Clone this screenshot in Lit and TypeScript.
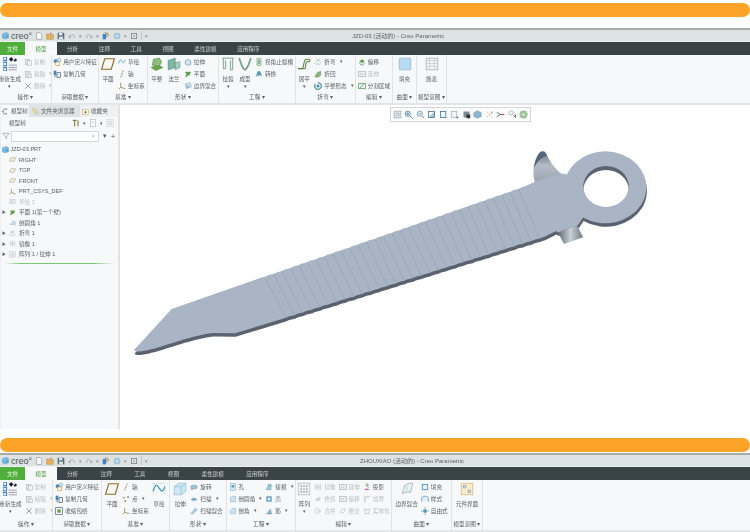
import { LitElement, html, css, svg, nothing } from 'lit';
import { customElement, property } from 'lit/decorators.js';

// icon shapes, all on a 12x12 box
const B = '#3f86c6';
const G = '#5fa24a';
const Y = '#d9a441';
const K = '#555c62';

const icons: Record<string, unknown> = {
  regen: svg`<rect x="0" y="0" width="3" height="3" fill="none" stroke="${B}"/><rect x="0" y="4.5" width="3" height="3" fill="none" stroke="${B}"/><rect x="0" y="9" width="3" height="3" fill="none" stroke="${B}"/><path d="M5 2l2-2 2 2-2 2zM9 3l2-2 1 2-2 1z" fill="#223"/><path d="M5 7h7M5 9h7M5 11h7" stroke="#99a" stroke-width=".8"/>`,
  copy: svg`<rect x="2" y="2" width="6" height="8" fill="#dfe4e8" stroke="#b4bcc2"/><rect x="5" y="4" width="6" height="7" fill="#eef1f3" stroke="#b4bcc2"/>`,
  paste: svg`<rect x="2" y="2" width="7" height="9" fill="#dfe4e8" stroke="#b4bcc2"/><rect x="6" y="6" width="5" height="5" fill="#eef1f3" stroke="#b4bcc2"/>`,
  del: svg`<path d="M2 2l8 8M10 2l-8 8" stroke="#8b9196" stroke-width="1.3"/>`,
  udf: svg`<circle cx="4" cy="5" r="3" fill="${B}"/><rect x="4" y="6" width="6" height="5" fill="#f1f3f5" stroke="${Y}"/><rect x="7" y="1" width="4" height="4" fill="#dfe8ee" stroke="#8aa"/>`,
  copygeom: svg`<rect x="1" y="1" width="4" height="7" fill="${B}"/><rect x="6" y="4" width="5" height="7" fill="#eef1f3" stroke="#456"/><path d="M2 10h3" stroke="${K}"/>`,
  shrink: svg`<rect x="1" y="1" width="10" height="10" fill="#fff" stroke="#456"/><rect x="3.5" y="3.5" width="5" height="5" fill="${G}"/>`,
  plane: svg`<path d="M3.2 1.5h8.3l-2.7 9H.5z" fill="#fbfaf5" stroke="#8a6b2e"/>`,
  sketch: svg`<path d="M1 8c2-7 3-6 5-3s3 3 5-2" fill="none" stroke="#2f8fb8" stroke-width="1.1"/>`,
  sketchBig: svg`<path d="M1 1h10M1 1v10M11 1v10" stroke="#9ab" stroke-width=".5" stroke-dasharray="1 1" fill="none"/><path d="M1 8c2-7 3-6 5-3s3 5 5-1" fill="none" stroke="#2f8fb8" stroke-width="1"/>`,
  axis: svg`<path d="M4 11L8 1" stroke="#6b5a2c" stroke-dasharray="3 1" stroke-width="1"/>`,
  point: svg`<path d="M2 3h2v2H2zM8 2h2v2H8zM4 8h2v2H4z" fill="#6b5a2c"/>`,
  csys: svg`<path d="M4 1v7l7 2M4 8l-3 3" fill="none" stroke="#8a6b2e" stroke-width="1"/>`,
  flat: svg`<path d="M1 9l6-2 4 2-6 2.5z" fill="#6aa84f" stroke="#4c7a3b" stroke-width=".5"/><path d="M2 7l1-5 5-1 2 3-2 4z" fill="#8ec07c" stroke="#4c7a3b" stroke-width=".5"/>`,
  flange: svg`<path d="M1 3l6-2v8l-6 2z" fill="#7fb8a4" stroke="#4a8270" stroke-width=".5"/><path d="M7 5l4-1v5l-4 2z" fill="#a9cfc0" stroke="#4a8270" stroke-width=".5"/>`,
  pull: svg`<path d="M2 4l5-2 3 2v6l-5 1-3-2z" fill="#d4e6f1" stroke="#4f87aa" stroke-width=".8"/>`,
  face: svg`<path d="M2 3h8L8 8H5l-1 2H2l2-4z" fill="${G}" stroke="#47803a" stroke-width=".5"/>`,
  blend: svg`<path d="M2 3l7-2 2 6-7 3z" fill="#cfe3ef" stroke="#6b9ab5" stroke-width=".8"/><circle cx="5" cy="7" r="2" fill="#8fb7cd"/>`,
  rip: svg`<path d="M1 1h10M2 1v9h2V3M8 3v8h2V1" fill="#e8f1ec" stroke="#78a08c" stroke-width=".8"/>`,
  form: svg`<path d="M1 1c2 5 2 8 5 10 3-2 3-5 5-10" fill="none" stroke="#78a08c" stroke-width="1.5"/>`,
  relief: svg`<path d="M3 1h6v10H3z" fill="#e3efe6" stroke="${G}"/><path d="M6 3v6" stroke="#23688f" stroke-width="1.5"/>`,
  convert: svg`<path d="M1 10l3-8h4l3 8-3-2H5z" fill="#5aa0cf"/><path d="M6 2v8" stroke="${G}"/>`,
  unbend: svg`<path d="M1 10h4l1-5 1-3h4v2H8l-1 6H1z" fill="#f1f2ec" stroke="#4c7a3b" stroke-width=".8"/>`,
  bend: svg`<path d="M1 9c3-7 7-7 10 0" fill="none" stroke="#87a88f" stroke-width="1.2" stroke-dasharray="1.5 1"/><path d="M3 1l3 3 3-3M3 11l3-3 3 3" fill="none" stroke="#87a88f"/>`,
  bendback: svg`<path d="M1 10l4-6 5-2v6l-4 3z" fill="#8bb47f" stroke="#4c7a3b" stroke-width=".6"/>`,
  flatstate: svg`<path d="M6 1a5 5 0 1 1-4 2" fill="none" stroke="#5aa07e" stroke-width="2"/><path d="M4 4h4v4H4z" fill="#3f86c6"/>`,
  offset: svg`<path d="M2 5l4-3 4 3-4 3z" fill="${G}"/><path d="M2 8l4 3 4-3" fill="none" stroke="#456"/>`,
  extend: svg`<rect x="1" y="2" width="10" height="8" fill="#edf0f1" stroke="#a8b0b5"/><path d="M3 6h5" stroke="#a8b0b5"/>`,
  split: svg`<rect x="1" y="2" width="10" height="8" fill="#e8f4e8" stroke="#5c8f55"/><path d="M3 9l6-6" stroke="#3f86c6"/>`,
  fillBig: svg`<rect x="1" y="1" width="10" height="10" rx=".8" fill="#b9dcf3" stroke="#7ea9c4" stroke-width=".5"/>`,
  family: svg`<rect x="1" y="1" width="10" height="10" fill="#f6f7f7" stroke="#8e9396" stroke-width=".5"/><path d="M1 3h10M1 5.5h10M1 8h10M4 1v10M8 1v10" stroke="#a9aeb1" stroke-width=".4"/>`,
  extrudeBig: svg`<path d="M1 4l4-3h6v7l-4 3H1z" fill="#cde6f4" stroke="#7fb2cf" stroke-width=".5"/><path d="M1 4h6v7M7 4l4-3" fill="none" stroke="#7fb2cf" stroke-width=".5"/>`,
  revolve: svg`<ellipse cx="6" cy="6" rx="5" ry="3" fill="#9fc3d9" stroke="#5b8aa6" stroke-width=".6"/><path d="M1 9l3 1" stroke="#b55"/>`,
  sweep: svg`<path d="M1 7c3-4 7-4 10 0-3 2-7 2-10 0z" fill="#6fa9cf"/>`,
  sweepblend: svg`<path d="M1 10l7-8 3 2-7 7z" fill="#a9cae0" stroke="#6b9ab5" stroke-width=".5"/>`,
  hole: svg`<rect x="2" y="1" width="8" height="10" fill="#d5e7f3" stroke="#7aa6c2" stroke-width=".7"/><circle cx="6" cy="5" r="2" fill="#5a9ac4"/>`,
  round: svg`<path d="M2 10V5c0-2 2-3 4-3h4v8z" fill="#cfe3ef" stroke="#7aa6c2" stroke-width=".7"/>`,
  chamfer: svg`<path d="M2 10V5l3-3h5v8z" fill="#cfe3ef" stroke="#7aa6c2" stroke-width=".7"/>`,
  draft: svg`<path d="M2 10l3-8h4v8z" fill="#9fc7e0" stroke="#5b8aa6" stroke-width=".6"/><path d="M8 3l3 3" stroke="${G}"/>`,
  shell: svg`<rect x="2" y="2" width="8" height="8" fill="#5a9ac4"/><rect x="4" y="4" width="4" height="4" fill="#eaf3f8"/>`,
  rib: svg`<path d="M1 10h10M3 10l5-7 2 7z" fill="#8fbad6" stroke="#5b8aa6" stroke-width=".6"/>`,
  pattern: svg`<rect x="1" y="1" width="10" height="10" fill="#f2f3f3" stroke="#a5a9ab" stroke-width=".5"/><path d="M3 3h1v1H3zM5.5 3h1v1h-1zM8 3h1v1H8zM3 5.5h1v1H3zM5.5 5.5h1v1h-1zM8 5.5h1v1H8zM3 8h1v1H3zM5.5 8h1v1h-1zM8 8h1v1H8z" fill="#666"/>`,
  mirror: svg`<path d="M2 2l3 4-3 4zM10 2L7 6l3 4z" fill="#e4e7e8" stroke="#b4babd" stroke-width=".6"/><path d="M6 1v10" stroke="#b4babd"/>`,
  trim: svg`<path d="M2 9c0-4 3-6 8-6l-1 6z" fill="#d3d8da"/>`,
  merge: svg`<circle cx="4.5" cy="6" r="3.5" fill="none" stroke="#c0c5c8"/><circle cx="8" cy="6" r="3" fill="#dde1e3"/>`,
  intersect: svg`<path d="M2 8c0-4 4-6 8-5-1 4-4 7-8 5z" fill="none" stroke="#b8bdc0"/>`,
  project: svg`<path d="M1 10l4-2 6 2-5 1z" fill="#c77dbb"/><path d="M6 2l2 5" stroke="#777"/><circle cx="6" cy="3" r="2" fill="none" stroke="#8a6"/>`,
  thicken: svg`<path d="M2 2h8L8 4H4v6l-2 1z" fill="none" stroke="#bcc1c4"/>`,
  solidify: svg`<path d="M2 3h3l1 2 1-2h3l-1 7H3z" fill="none" stroke="#b8bdc0"/>`,
  boundaryBig: svg`<path d="M2 10l2-7c3-2 5-2 7-2l-2 8c-3-1-5 0-7 1z" fill="#e9f3f8" stroke="#6f7d84" stroke-width=".4"/><path d="M4 3l5 6M7 2l-2 7" stroke="#9db7c6" stroke-width=".3"/>`,
  fill: svg`<rect x="2" y="2" width="8" height="8" fill="#e8f3fa" stroke="#3f86c6" stroke-width="1.2"/>`,
  style: svg`<path d="M1 10V4c2-3 8-3 10 0v6" fill="#e4f0f7" stroke="#3f86c6"/>`,
  freestyle: svg`<circle cx="6" cy="6" r="3" fill="#5a9ac4"/><path d="M6 0v2M6 10v2M0 6h2M10 6h2" stroke="#3b6f90"/>`,
  iface: svg`<rect x="1" y="1" width="10" height="10" fill="#f9eccb" stroke="#c7a45c" stroke-width=".5"/><path d="M3 3h2v2H3zM7 7h2v2H7z" fill="none" stroke="#3f86c6" stroke-width=".5"/>`,
  // quick access
  doc: svg`<path d="M2.5 1h5L10 3.5V11H2.5z" fill="#fff" stroke="#8f9699"/>`,
  open: svg`<path d="M1 3h4l1 1h5v7H1z" fill="#e0b45c" stroke="#a37a2d" stroke-width=".6"/><path d="M6 1l3 2" stroke="#c33"/>`,
  save: svg`<path d="M1 1h9l1 1v9H1z" fill="#5b6e7d"/><rect x="3" y="1.5" width="5" height="3.5" fill="#e6eaec"/><rect x="3" y="7" width="6" height="4" fill="#dfe4e7"/>`,
  undo: svg`<path d="M2 8c0-3 3-4 5-4s3 2 2 5" fill="none" stroke="#8a9aa5"/><path d="M.5 6L3 10l1-3.5z" fill="#8a9aa5"/>`,
  redo: svg`<path d="M10 8c0-3-3-4-5-4S2 6 3 9" fill="none" stroke="#8a9aa5"/><path d="M11.5 6L9 10 8 6.5z" fill="#8a9aa5"/>`,
  rebuild: svg`<rect x="1" y="3" width="5" height="8" fill="#3f86c6"/><path d="M6 2l4 1v2L6 8zM2 1h7" fill="#d8c26f" stroke="#666" stroke-width=".5"/>`,
  windows: svg`<circle cx="6" cy="6" r="4.5" fill="#a7cbe4" stroke="#5b8aa6" stroke-width=".5"/><path d="M1 6h10M6 1v10" stroke="#eef" stroke-width=".6"/>`,
  closeWin: svg`<rect x="2" y="2" width="8" height="8" fill="#e5e9ea" stroke="#6d7478"/><path d="M4 4l4 4M8 4l-4 4" stroke="#6d7478" stroke-width=".7"/>`,
  cube: svg`<path d="M1 3l7-2 3 2v7l-7 2-3-2z" fill="#61b0df" stroke="#2e78ad" stroke-width=".6"/><path d="M4 4v8M1 3l3 1 7-1" fill="none" stroke="#d7eefb" stroke-width=".6"/>`,
  // model tree
  tree: svg`<path d="M1 6h3M4 2v8M4 2h3M4 10h3" stroke="#6a7277" fill="none"/><rect x="7" y="1" width="3" height="2" fill="#6a7277"/><rect x="7" y="9" width="3" height="2" fill="#6a7277"/>`,
  folder: svg`<path d="M1 2l4-1 6 7-4 3z" fill="#edd9a4" stroke="#b8923e" stroke-width=".6"/>`,
  star: svg`<rect x="1" y="3" width="10" height="8" fill="#fff1c7" stroke="#a58c4a" stroke-width=".6"/><circle cx="6" cy="7" r="1.5" fill="#333"/>`,
  tools: svg`<path d="M1 2h6M4 2v9M9 2v9" stroke="#7c6a2e" stroke-width="1.5"/>`,
  sheet: svg`<rect x="2" y="1" width="8" height="10" fill="#fff" stroke="#98a0a4" stroke-width=".7"/><path d="M4 4h4M4 6h4" stroke="#98a0a4" stroke-width=".6"/>`,
  grid: svg`<rect x="1" y="1" width="10" height="10" fill="#eef0f1" stroke="#c2c7ca" stroke-width=".6"/><path d="M4 4h4v4H4z" fill="none" stroke="#aeb4b8" stroke-width=".6"/>`,
  funnel: svg`<path d="M1 2h10L7 6v4L5 8V6z" fill="#fff" stroke="#747c81" stroke-width=".8"/>`,
  planeSmall: svg`<path d="M3.5 3H11L8.5 9H1z" fill="#f6f1e0" stroke="#8a7a46" stroke-width=".7"/>`,
  sketchOff: svg`<rect x="1" y="2" width="10" height="8" fill="#e6e8e9" stroke="#c2c6c8" stroke-width=".6"/><path d="M2 9l3-5 3 5" fill="none" stroke="#b2b7ba" stroke-width=".6"/>`,
  roundTree: svg`<path d="M1 9c3 0 5-2 6-6l4 2v5z" fill="#c6dfee" stroke="#6f9fbc" stroke-width=".5"/>`,
  // view toolbar
  refit: svg`<rect x="1.5" y="1.5" width="9" height="9" fill="#e7eef2" stroke="#8399a6" stroke-width=".8"/><circle cx="6" cy="6" r="2.2" fill="none" stroke="#6d8896" stroke-width=".7"/>`,
  zoomIn: svg`<circle cx="5" cy="5" r="3.5" fill="#cfe1ec" stroke="#4d7f9e"/><path d="M8 8l3 3" stroke="#4d7f9e" stroke-width="1.3"/><path d="M3.5 5h3M5 3.5v3" stroke="#27536e" stroke-width=".7"/>`,
  zoomOut: svg`<circle cx="5" cy="5" r="3.5" fill="#e3ecf1" stroke="#6d93aa"/><path d="M8 8l3 3" stroke="#6d93aa" stroke-width="1.3"/><path d="M3.5 5h3" stroke="#27536e" stroke-width=".7"/>`,
  view1: svg`<path d="M2 10l8-8v8z" fill="#9fc4db"/><rect x="2" y="2" width="8" height="8" fill="none" stroke="#446b84"/>`,
  view2: svg`<rect x="2" y="2" width="7" height="8" fill="#f2f7fa" stroke="#3f7da4" stroke-width="1.1"/><path d="M10 10h1v1h-1z" fill="#333"/>`,
  view3: svg`<rect x="2" y="2" width="7" height="8" fill="#f2f5f7" stroke="#8ba1ae" stroke-width=".8"/><path d="M9 9h2v2H9z" fill="#557"/>`,
  view4: svg`<rect x="2" y="2" width="8" height="8" fill="#7d8b93"/><rect x="6" y="6" width="5" height="5" fill="#333"/>`,
  view5: svg`<path d="M6 1l5 2.5v5L6 11 1 8.5v-5z" fill="#8cb6d1" stroke="#5c8aa6" stroke-width=".5"/>`,
  view6: svg`<path d="M2 2l8 8M3 9l2-2" stroke="#b28a54" stroke-dasharray="1.5 1"/><path d="M9 2v3" stroke="#567"/>`,
  view7: svg`<path d="M1 3l5 3-5 3M6 6h5" fill="none" stroke="#3a5a6b" stroke-width="1.1"/><path d="M8 6h3" stroke="#c33"/>`,
  view8: svg`<circle cx="4" cy="4" r="3" fill="#eef2f4" stroke="#8b9aa3" stroke-width=".7"/><path d="M7 7l3 3M10 6v4" stroke="#444"/>`,
  view9: svg`<circle cx="6" cy="6" r="5" fill="#a8cfa0" stroke="#6a9a62" stroke-width=".6"/><circle cx="6" cy="6" r="2" fill="#eef" stroke="#777" stroke-width=".5"/>`,
};

const icon = (name: string) =>
  html`<svg class="ic" viewBox="0 0 12 12" aria-hidden="true">${icons[name]}</svg>`;

const OPERATE = {
  label: '操作',
  width: 52,
  cols: [
    { big: 'regen', text: '重新生成', arrow: true },
    {
      items: [
        { i: 'copy', t: '复制', off: true },
        { i: 'paste', t: '粘贴', off: true, arrow: true },
        { i: 'del', t: '删除', off: true, arrow: true },
      ],
    },
  ],
};

const TOP_GROUPS = [
  OPERATE,
  {
    label: '获取数据',
    width: 47,
    cols: [{ items: [{ i: 'udf', t: '用户定义特征' }, { i: 'copygeom', t: '复制几何' }] }],
  },
  {
    label: '基准',
    width: 49,
    cols: [
      { big: 'plane', text: '平面' },
      { items: [{ i: 'sketch', t: '草绘' }, { i: 'axis', t: '轴' }, { i: 'csys', t: '坐标系' }] },
    ],
  },
  {
    label: '形状',
    width: 71,
    cols: [
      { big: 'flat', text: '平整' },
      { big: 'flange', text: '法兰' },
      { items: [{ i: 'pull', t: '拉伸' }, { i: 'face', t: '平面' }, { i: 'blend', t: '边界混合' }] },
    ],
  },
  {
    label: '工程',
    width: 77,
    cols: [
      { big: 'rip', text: '扯裂', arrow: true },
      { big: 'form', text: '成型', arrow: true },
      { items: [{ i: 'relief', t: '拐角止裂槽' }, { i: 'convert', t: '转换' }] },
    ],
  },
  {
    label: '折弯',
    width: 60,
    cols: [
      { big: 'unbend', text: '展平', arrow: true },
      {
        items: [
          { i: 'bend', t: '折弯', arrow: true },
          { i: 'bendback', t: '折回' },
          { i: 'flatstate', t: '平整形态', arrow: true },
        ],
      },
    ],
  },
  {
    label: '编辑',
    width: 37,
    cols: [
      { items: [{ i: 'offset', t: '偏移' }, { i: 'extend', t: '延伸', off: true }, { i: 'split', t: '分割区域' }] },
    ],
  },
  { label: '曲面', width: 24, cols: [{ big: 'fillBig', text: '填充' }] },
  { label: '模型意图', width: 30, cols: [{ big: 'family', text: '族表' }] },
];

const BOTTOM_GROUPS = [
  { ...OPERATE, width: 53 },
  {
    label: '获取数据',
    width: 49,
    cols: [
      { items: [{ i: 'udf', t: '用户定义特征' }, { i: 'copygeom', t: '复制几何' }, { i: 'shrink', t: '收缩包络' }] },
    ],
  },
  {
    label: '基准',
    width: 68,
    cols: [
      { big: 'plane', text: '平面' },
      { items: [{ i: 'axis', t: '轴' }, { i: 'point', t: '点', arrow: true }, { i: 'csys', t: '坐标系' }] },
      { big: 'sketchBig', text: '草绘' },
    ],
  },
  {
    label: '形状',
    width: 57,
    cols: [
      { big: 'extrudeBig', text: '拉伸' },
      {
        items: [
          { i: 'revolve', t: '旋转' },
          { i: 'sweep', t: '扫描', arrow: true },
          { i: 'sweepblend', t: '扫描混合' },
        ],
      },
    ],
  },
  {
    label: '工程',
    width: 69,
    cols: [
      { items: [{ i: 'hole', t: '孔' }, { i: 'round', t: '倒圆角', arrow: true }, { i: 'chamfer', t: '倒角', arrow: true }] },
      { items: [{ i: 'draft', t: '拔模', arrow: true }, { i: 'shell', t: '壳' }, { i: 'rib', t: '筋', arrow: true }] },
    ],
  },
  {
    label: '编辑',
    width: 96,
    cols: [
      { big: 'pattern', text: '阵列', arrow: true },
      {
        items: [
          { i: 'mirror', t: '镜像', off: true },
          { i: 'trim', t: '修剪', off: true },
          { i: 'merge', t: '合并', off: true },
        ],
      },
      {
        items: [
          { i: 'extend', t: '延伸', off: true },
          { i: 'extend', t: '偏移', off: true },
          { i: 'intersect', t: '相交', off: true },
        ],
      },
      {
        items: [
          { i: 'project', t: '投影' },
          { i: 'thicken', t: '加厚', off: true },
          { i: 'solidify', t: '实体化', off: true },
        ],
      },
    ],
  },
  {
    label: '曲面',
    width: 60,
    cols: [
      { big: 'boundaryBig', text: '边界混合' },
      { items: [{ i: 'fill', t: '填充' }, { i: 'style', t: '样式' }, { i: 'freestyle', t: '自由式' }] },
    ],
  },
  { label: '模型意图', width: 31, cols: [{ big: 'iface', text: '元件界面' }] },
];

const TABS = ['分析', '注释', '工具', '视图', '柔性建模', '应用程序'];
const QUICK = ['doc', 'open', 'save', 'undo', '▾', 'redo', '▾', 'rebuild', 'windows', '▾', 'closeWin'];

@customElement('creo-window')
class CreoWindow extends LitElement {
  static styles = css`
    :host {
      display: block;
      font-family: 'Liberation Sans', 'Noto Sans CJK SC', sans-serif;
      font-size: 5.6px;
      color: #5a6064;
    }
    .chrome {
      border-top: 2px solid #a9abab;
      filter: blur(0.25px);
    }
    .title {
      height: 12px;
      box-sizing: border-box;
      background: #dde3e3;
      display: flex;
      align-items: center;
      border-bottom: 1px solid #eef1f1;
    }
    .logo {
      display: flex;
      align-items: center;
      gap: 2px;
      width: 35px;
      padding-left: 2px;
      box-sizing: border-box;
      color: #4d5356;
      font-size: 9px;
      flex: none;
    }
    .logo .ic {
      width: 7px;
      height: 9px;
      flex: none;
    }
    .quick {
      display: flex;
      align-items: center;
      gap: 3px;
    }
    .quick .ic {
      width: 8px;
      height: 8px;
    }
    .quick span {
      font-size: 5px;
      color: #8a9296;
    }
    .divider {
      width: 1px;
      height: 9px;
      background: #c1c7c8;
    }
    .caption {
      font-size: 6px;
      white-space: nowrap;
      color: #5e6468;
    }
    .tabs {
      height: 13px;
      background: #3a4446;
      display: flex;
      align-items: stretch;
      color: #c9cfd0;
    }
    .tabs div {
      display: flex;
      align-items: center;
    }
    .file {
      width: 25px;
      justify-content: center;
      background: #4fae3c;
      color: #e8f6e2;
    }
    .active {
      width: 32px;
      justify-content: center;
      background: #f7f8fa;
      color: #4f9a3e;
    }
    .tablist {
      padding-left: 10px;
    }
    .ribbon {
      display: flex;
      background: #f7f8fa;
      border-bottom: 2px solid #e3e5e6;
      white-space: nowrap;
    }
    .group {
      box-sizing: border-box;
      border-right: 1px solid #e0e3e5;
      display: flex;
      flex-direction: column;
      flex: none;
    }
    .body {
      flex: 1;
      display: flex;
      justify-content: center;
      gap: 3px;
      padding-top: 2px;
    }
    .label {
      height: 10px;
      line-height: 9px;
      text-align: center;
    }
    .big {
      display: flex;
      flex-direction: column;
      align-items: center;
      gap: 4px;
    }
    .big .ic {
      width: 14px;
      height: 14px;
    }
    .big .arrow {
      line-height: 5px;
      font-size: 5px;
      color: #555;
      margin-top: -3px;
    }
    .column {
      display: flex;
      flex-direction: column;
      gap: 3px;
    }
    .item {
      display: flex;
      align-items: center;
      gap: 2px;
      height: 9px;
    }
    .item .ic {
      width: 8px;
      height: 8px;
    }
    .off {
      color: #b9bdc0;
    }
    .item span {
      font-size: 4.5px;
      margin-left: 2px;
    }
  `;

  @property() caption = '';
  @property({ type: Number }) captionLeft = 0;
  @property({ type: Number }) tabGap = 21;
  @property({ type: Number }) ribbonHeight = 46;
  @property({ attribute: false }) groups: any[] = [];

  renderCol(col: any) {
    if (col.big) {
      return html`<div class="big">
        ${icon(col.big)}<div>${col.text}</div>
        ${col.arrow ? html`<div class="arrow">▾</div>` : nothing}
      </div>`;
    }
    return html`<div class="column">
      ${col.items.map(
        (it: any) => html`<div class="item ${it.off ? 'off' : ''}">
          ${icon(it.i)}${it.t}${it.arrow ? html`<span>▾</span>` : nothing}
        </div>`,
      )}
    </div>`;
  }

  render() {
    return html`
      <div class="chrome">
        <div class="title">
          <div class="logo">${icon('cube')}<span>creo°</span></div>
          <div class="quick">
            ${QUICK.map((q) => (q === '▾' ? html`<span>▾</span>` : icon(q)))}
            <div class="divider"></div>
            <span>▾</span>
          </div>
          <div class="caption" style="margin-left:${this.captionLeft}px">${this.caption}</div>
        </div>
        <div class="tabs">
          <div class="file">文件</div>
          <div class="active">模型</div>
          <div class="tablist" style="gap:${this.tabGap}px">
            ${TABS.map((t) => html`<span>${t}</span>`)}
          </div>
        </div>
        <div class="ribbon" style="height:${this.ribbonHeight}px">
          ${this.groups.map(
            (g) => html`<div class="group" style="width:${g.width}px">
              <div class="body">${g.cols.map((c: any) => this.renderCol(c))}</div>
              <div class="label">${g.label} ▾</div>
            </div>`,
          )}
        </div>
      </div>
      <slot></slot>
    `;
  }
}

const TREE = [
  { i: 'cube', t: 'JZD-03.PRT', root: true },
  { i: 'planeSmall', t: 'RIGHT' },
  { i: 'planeSmall', t: 'TOP' },
  { i: 'planeSmall', t: 'FRONT' },
  { i: 'csys', t: 'PRT_CSYS_DEF' },
  { i: 'sketchOff', t: '草绘 1', off: true },
  { i: 'face', t: '平面 1(第一个壁)', open: true },
  { i: 'roundTree', t: '倒圆角 1' },
  { i: 'bend', t: '折弯 1', open: true },
  { i: 'mirror', t: '镜像 1', open: true },
  { i: 'pattern', t: '阵列 1 / 拉伸 1', open: true },
];

const VIEW_TOOLS = [
  'refit', 'zoomIn', 'zoomOut', 'view1', 'view2', 'view3',
  'view4', 'view5', 'view6', 'view7', 'view8', 'view9',
];

// the ridged strip of the part, points run along the two long edges
const TEETH = 31;
const PITCH = 8.45;

function ridgeTop() {
  const pts: string[] = [];
  for (let i = 0; i < TEETH; i++) {
    const x = 265 + i * PITCH;
    const y = 277 - 0.347 * (x - 265);
    pts.push(`${x.toFixed(1)} ${y.toFixed(1)}`, `${(x + 3).toFixed(1)} ${(y - 1.7).toFixed(1)}`, `${(x + 6).toFixed(1)} ${(y - 2.4).toFixed(1)}`);
  }
  return pts.join(' L');
}

function ridgeBottom() {
  const pts: string[] = [];
  for (let i = TEETH - 1; i >= 0; i--) {
    const x = 286 + i * PITCH;
    const y = 317.8 - 0.3125 * (x - 286);
    pts.push(`${(x + 5).toFixed(1)} ${(y - 1.9).toFixed(1)}`, `${(x + 2.5).toFixed(1)} ${(y - 1.2).toFixed(1)}`, `${x.toFixed(1)} ${y.toFixed(1)}`);
  }
  return pts.join(' L');
}

const FACE = `M134.7 349.3L171.7 309L263 277L${ridgeTop()}L535 181.7L561.5 173.5L567 174.5A41 36 0 1 1 583 217.5L578 225L572 227L558 232.5L556 231L${ridgeBottom()}L235 333.3L213 333C200 334 175 342 163 346C150 350 140 352 136.5 351.5Q133 351 134.7 349.3Z`;

@customElement('app-root')
class AppRoot extends LitElement {
  static styles = css`
    :host {
      display: block;
      width: 750px;
      height: 532px;
      overflow: hidden;
      background: #fff;
      font-family: 'Liberation Sans', 'Noto Sans CJK SC', sans-serif;
      font-size: 5.6px;
      color: #5a6064;
    }
    .page {
      display: flex;
      flex-direction: column;
      padding-top: 3px;
    }
    .banner {
      height: 14px;
      border-radius: 7px;
      background: #fda428;
      flex: none;
    }
    .first {
      margin-top: 11px;
    }
    .second {
      margin-top: 9px;
    }
    .third {
      margin-top: 1px;
    }
    .workspace {
      display: flex;
      height: 324px;
    }
    .panel {
      width: 120px;
      flex: none;
      box-sizing: border-box;
      background: #f7f8fa;
      border-right: 2px solid #e2e3e4;
      border-left: 1px solid #eceeef;
      display: flex;
      flex-direction: column;
      filter: blur(0.25px);
      white-space: nowrap;
    }
    .ptabs {
      display: flex;
      height: 12px;
      background: #dde3e3;
    }
    .ptab {
      display: flex;
      align-items: center;
      gap: 3px;
      box-sizing: border-box;
    }
    .ptab .ic {
      width: 7px;
      height: 7px;
      flex: none;
    }
    .ptab.on {
      background: #f7f8fa;
      width: 28px;
    }
    .ptab.browser {
      width: 51px;
      padding-left: 3px;
      gap: 2px;
    }
    .ptab.fav {
      background: #eef1f1;
      width: 38px;
      padding-left: 2px;
      gap: 2px;
    }
    .phead {
      display: flex;
      align-items: center;
      height: 12px;
      padding-left: 8px;
    }
    .phead .tools {
      margin-left: auto;
      margin-right: 4px;
      display: flex;
      align-items: center;
      gap: 3px;
      font-size: 5px;
    }
    .phead .ic,
    .search .ic {
      width: 8px;
      height: 8px;
    }
    .search {
      display: flex;
      align-items: center;
      height: 12px;
      margin-top: 1px;
      padding-left: 1px;
      gap: 1px;
    }
    .box {
      width: 88px;
      height: 11px;
      box-sizing: border-box;
      background: #fff;
      border: 1px solid #d3d7d9;
      display: flex;
      align-items: center;
      justify-content: flex-end;
      padding-right: 3px;
      color: #9ba1a4;
      font-size: 5px;
    }
    .search b {
      font-weight: normal;
      font-size: 7px;
      margin-left: 3px;
    }
    .rows {
      display: flex;
      flex-direction: column;
      margin-top: 2px;
    }
    .row {
      height: 10.5px;
      display: flex;
      align-items: center;
      gap: 3px;
      padding-left: 8px;
      white-space: nowrap;
    }
    .row .ic {
      width: 7px;
      height: 7px;
    }
    .row.root {
      padding-left: 1px;
      gap: 1.5px;
    }
    .row.open {
      padding-left: 1px;
      gap: 3px;
    }
    .row.open i {
      font-style: normal;
      font-size: 4px;
      color: #666;
    }
    .row.off {
      color: #b9bdc0;
    }
    .meter {
      height: 1px;
      margin: 3.5px 3px 0;
      background: linear-gradient(90deg, transparent, #7cc774 15%, #7cc774 80%, transparent);
    }
    .canvas {
      flex: 1;
      position: relative;
      background: #fff;
    }
    .part {
      position: absolute;
      inset: 0;
      width: 630px;
      height: 324px;
    }
    .viewbar {
      position: absolute;
      left: 270px;
      top: 2px;
      width: 141px;
      height: 15px;
      box-sizing: border-box;
      display: flex;
      align-items: center;
      justify-content: center;
      gap: 2.5px;
      background: #fcfcfc;
      border: 1px solid #d3d5d6;
      filter: blur(0.25px);
    }
    .viewbar .ic {
      width: 9px;
      height: 9px;
    }
  `;

  renderPart() {
    const lines = [];
    for (let i = 0; i < TEETH; i++) {
      const x1 = 265 + i * PITCH;
      const x2 = 286 + i * PITCH;
      const y1 = 277 - 0.347 * (x1 - 265);
      const y2 = 317.8 - 0.3125 * (x2 - 286);
      lines.push(svg`<line x1="${x1}" y1="${y1}" x2="${x2}" y2="${y2}"/>`);
    }
    return html`<svg class="part" viewBox="120 105 630 324">
      <defs>
        <linearGradient id="spike" x1="0" y1="0" x2="0" y2="1">
          <stop offset="0" stop-color="#5f6f80" />
          <stop offset="0.45" stop-color="#b5bcc6" />
          <stop offset="1" stop-color="#9aa3ae" />
        </linearGradient>
        <linearGradient id="hook" x1="0" y1="0" x2="1" y2="0">
          <stop offset="0" stop-color="#5f6b77" />
          <stop offset="0.5" stop-color="#c8ced4" />
          <stop offset="1" stop-color="#6e7986" />
        </linearGradient>
        <clipPath id="bore"><ellipse cx="606" cy="186.5" rx="22.8" ry="20.5" /></clipPath>
      </defs>
      <path d="${FACE}" fill="#59626e" transform="translate(0.6 3.5)" />
      <path d="M558 232.5L564 244L583 237.3L577 225L572 227Z" fill="url(#hook)" />
      <path d="M535 183C532 172 533 160 540 152C542 150.5 545 151 546 153C549 161 556 170 562 174.5Z" fill="url(#spike)" />
      <path d="M534 168C535 160 538 154 541 152C544 151 546 154 547 156C543 156 537 161 534 168Z" fill="#52657a" />
      <path d="${FACE}" fill="#a9b5c5" />
      <g stroke="#8d99a9" stroke-width="0.5">${lines}</g>
      <ellipse cx="606" cy="186.5" rx="22.8" ry="20.5" fill="#5a6470" />
      <g clip-path="url(#bore)">
        <ellipse cx="606" cy="190.5" rx="22.8" ry="20.5" fill="#fff" />
      </g>
    </svg>`;
  }

  render() {
    return html`<div class="page">
      <div class="banner"></div>
      <creo-window
        class="first"
        caption="JZD-03 (活动的) - Creo Parametric"
        .captionLeft=${204}
        .tabGap=${20.6}
        .ribbonHeight=${48}
        .groups=${TOP_GROUPS}
      >
        <div class="workspace">
          <div class="panel">
            <div class="ptabs">
              <div class="ptab on">${icon('tree')}模型树</div>
              <div class="ptab browser">${icon('folder')}文件夹浏览器</div>
              <div class="ptab fav">${icon('star')}收藏夹</div>
            </div>
            <div class="phead">
              模型树
              <div class="tools">${icon('tools')}▾${icon('sheet')}▾${icon('grid')}</div>
            </div>
            <div class="search">
              ${icon('funnel')}
              <div class="box">×</div>
              <b>▾</b><b>+</b>
            </div>
            <div class="rows">
              ${TREE.map(
                (r) => html`<div class="row ${r.root ? 'root' : ''} ${r.open ? 'open' : ''} ${r.off ? 'off' : ''}">
                  ${r.open ? html`<i>▶</i>` : nothing}${icon(r.i)}${r.t}
                </div>`,
              )}
            </div>
            <div class="meter"></div>
          </div>
          <div class="canvas">
            ${this.renderPart()}
            <div class="viewbar">${VIEW_TOOLS.map((v) => icon(v))}</div>
          </div>
        </div>
      </creo-window>
      <div class="banner second"></div>
      <creo-window
        class="third"
        caption="ZHOUXIAO (活动的) - Creo Parametric"
        .captionLeft=${212}
        .tabGap=${22.4}
        .ribbonHeight=${50}
        .groups=${BOTTOM_GROUPS}
      ></creo-window>
    </div>`;
  }
}
